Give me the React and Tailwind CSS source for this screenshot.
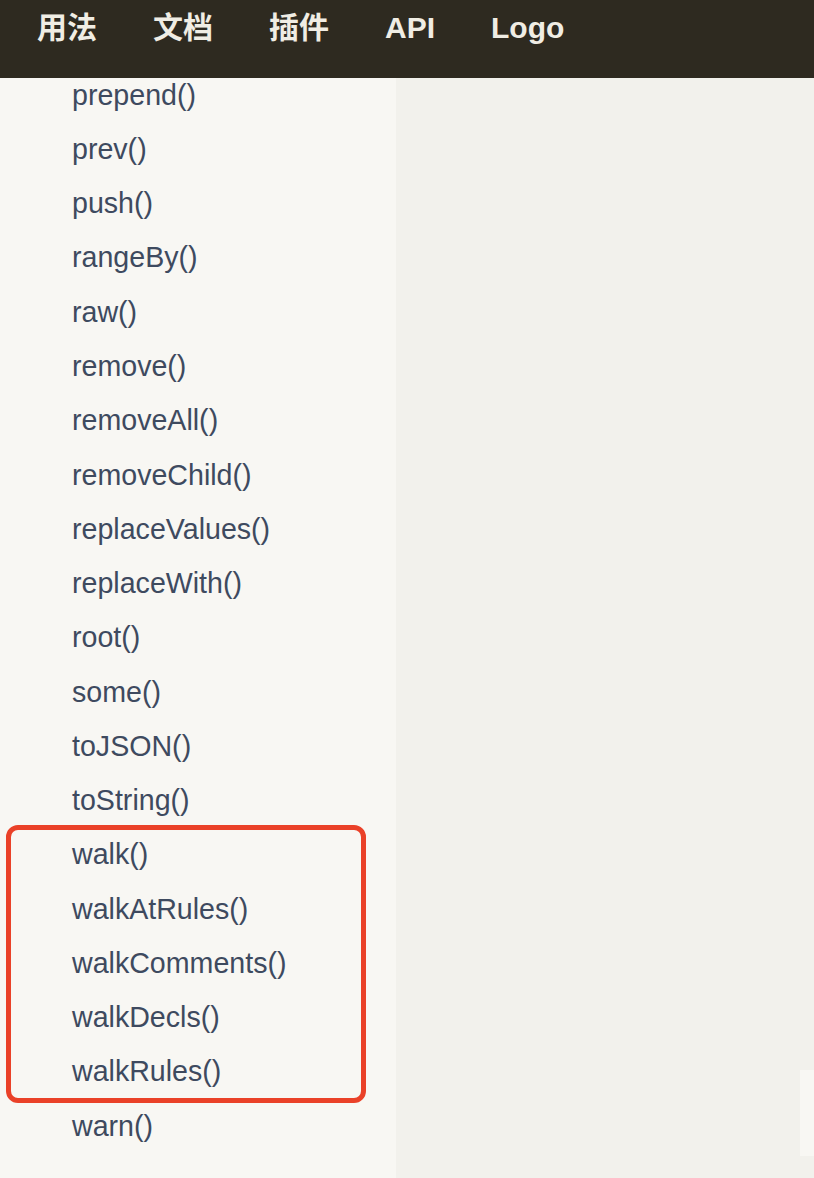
import React from "react";

const navItems = ["用法", "文档", "插件", "API", "Logo"];

const methods = [
  "prepend()",
  "prev()",
  "push()",
  "rangeBy()",
  "raw()",
  "remove()",
  "removeAll()",
  "removeChild()",
  "replaceValues()",
  "replaceWith()",
  "root()",
  "some()",
  "toJSON()",
  "toString()",
  "walk()",
  "walkAtRules()",
  "walkComments()",
  "walkDecls()",
  "walkRules()",
  "warn()",
];

const App = () => {
  return (
    <div className="flex h-[1178px] w-[814px] flex-col overflow-hidden bg-[#f2f1ec] font-['Liberation_Sans','Noto_Sans_CJK_SC',sans-serif]">
      {/* Top nav */}
      <header className="flex h-[78px] shrink-0 gap-[56px] bg-[#2e2a20] pl-[37px] pt-[9px] text-[30px] font-bold leading-[38px] text-[#f0ede4]">
        {navItems.map((item) => (
          <span key={item}>{item}</span>
        ))}
      </header>

      <div className="flex flex-1">
        {/* Sidebar */}
        <aside className="relative w-[396px] shrink-0 overflow-hidden bg-[#f8f7f3]">
          <ul className="-mt-[10px]">
            {methods.map((m) => (
              <li
                key={m}
                className="flex h-[54.27px] items-center pl-[72px] text-[28.6px] text-[#3e4a5f]"
              >
                {m}
              </li>
            ))}
          </ul>

          {/* annotation box */}
          <div className="absolute left-[6px] top-[747px] h-[278px] w-[360px] rounded-[12px] border-[5px] border-[#ea4128]"></div>
        </aside>

        {/* Main */}
        <main className="flex flex-1 justify-end pt-[992px]">
          <div className="h-[86px] w-[14px] bg-[#f8f7f3]"></div>
        </main>
      </div>
    </div>
  );
};

export default App;
